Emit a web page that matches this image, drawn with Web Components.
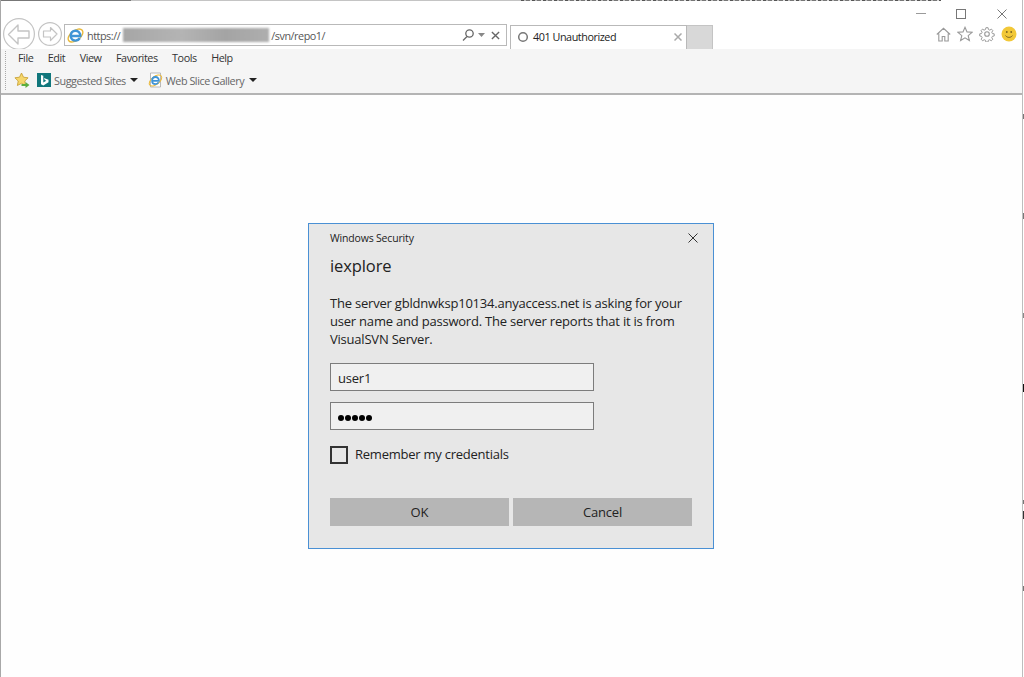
<!DOCTYPE html>
<html>
<head>
<meta charset="utf-8">
<title>401 Unauthorized</title>
<style>
  html, body { margin: 0; height: 100%; background: #fff; overflow: hidden; }
  body { font-family: "Open Sans", "Noto Sans", sans-serif; }
</style>
</head>
<body>
<ie-window>
  <ie-tabbar slot="top"></ie-tabbar>
  <ie-toolbar slot="top"></ie-toolbar>
  <security-dialog
    heading="iexplore"
    message="The server gbldnwksp10134.anyaccess.net is asking for your user name and password. The server reports that it is from VisualSVN Server.">
  </security-dialog>
</ie-window>

<script>
class IeWindow extends HTMLElement {
  constructor() {
    super();
    this.shadowDOM = this.attachShadow({mode: 'open'});
    this.shadowDOM.innerHTML = `
      <style>
        :host {
          display: flex;
          flex-direction: column;
          height: 677px;
          box-sizing: border-box;
          border-left: 1px solid #a8a8a8;
          border-right: 1px solid #bdbdbd;
          margin-right: 1px;
          background: #fff;
          position: relative;
        }
        .edge {
          height: 1px;
          flex: none;
          background:
            repeating-linear-gradient(90deg, #555 0 3px, #bbb 3px 5px, #777 5px 9px, #ddd 9px 11px) 520px 0 / 420px 1px no-repeat,
            linear-gradient(90deg, #777 0 130px, #c4c4c4 130px 520px, #fff 940px);
        }
        .page {
          flex: 1;
          display: flex;
          justify-content: center;
          align-items: flex-start;
          padding: 128px 1px 0 0;
          background: #fefefe;
        }
        /* bits of the window behind, showing past the right edge */
        .behind {
          position: absolute;
          top: 0;
          bottom: 0;
          right: -2px;
          width: 1px;
          background:
            linear-gradient(#777, #777) 0 114px / 1px 5px no-repeat,
            linear-gradient(#777, #777) 0 213px / 1px 6px no-repeat,
            linear-gradient(#888, #888) 0 313px / 1px 5px no-repeat,
            linear-gradient(#111, #111) 0 384px / 1px 8px no-repeat,
            linear-gradient(#777, #777) 0 500px / 1px 4px no-repeat,
            linear-gradient(#333, #333) 0 511px / 1px 8px no-repeat,
            linear-gradient(#777, #777) 0 586px / 1px 5px no-repeat;
        }
      </style>
      <div class="edge"></div>
      <slot name="top"></slot>
      <div class="page"><slot></slot></div>
      <div class="behind"></div>
    `;
  }
}

class IeTabbar extends HTMLElement {
  constructor() {
    super();
    this.shadowDOM = this.attachShadow({mode: 'open'});
    this.shadowDOM.innerHTML = `
      <style>
        :host {
          display: grid;
          grid-template-columns: 1fr 106px;
          height: 48px;
          color: #444;
          font-size: 10.8px;
          letter-spacing: -.45px;
        }
        .left { display: flex; align-items: flex-end; padding-left: 2px; }
        .nav { display: flex; align-items: center; gap: 3px; flex: none; width: 61px; height: 32px; margin-bottom: -1px; }
        .address {
          margin: 0 0 3px 0;
          width: 441px;
          height: 20px;
          flex: none;
          border: 1px solid #b9b9b9;
          display: flex;
          align-items: center;
          background: #fff;
        }
        .url { margin-left: 3px; color: #555; display: flex; align-items: center; flex: 1; white-space: nowrap; }
        .blur {
          display: inline-block;
          width: 146px;
          height: 14px;
          margin: 0 2px 0 3px;
          background: linear-gradient(90deg, #a6a6a6, #b4b4b4 40%, #a4a4a4 70%, #aeaeae);
          filter: blur(.8px);
        }
        .tab {
          margin-left: 3px;
          width: 177px;
          height: 24px;
          flex: none;
          box-sizing: border-box;
          border: 1px solid #b9b9b9;
          border-bottom: 0;
          display: flex;
          align-items: center;
          color: #222;
          padding: 0 0 2px 6px;
          gap: 4px;
        }
        .tab span { flex: 1; white-space: nowrap; }
        .newtab { width: 26px; height: 24px; box-sizing: border-box; flex: none; background: #d8d8d8; border: 1px solid #c4c4c4; border-bottom: 0; border-left: 0; }
        .right { display: flex; flex-direction: column; }
        .caption { height: 22px; display: flex; align-items: flex-start; padding-top: 8px; box-sizing: border-box; }
        .tools { display: flex; gap: 6px; align-items: center; padding-left: 20px; height: 22px; }
        svg { flex: none; display: block; }
      </style>
      <div class="left">
        <div class="nav">
          <svg width="32" height="32" viewBox="0 0 32 32" fill="none">
            <circle cx="16" cy="16" r="15.400" fill="#fff" stroke="#c4c4c4" stroke-width="1.200"/>
            <path d="M15 7 5.500 16.500 15 26v-6h11v-7H15z" fill="#fff" stroke="#c4c4c4" stroke-width="1.400" stroke-linejoin="round"/>
          </svg>
          <svg width="24" height="24" viewBox="0 0 24 24" fill="none">
            <circle cx="12" cy="12" r="11.400" fill="#fff" stroke="#c4c4c4" stroke-width="1.200"/>
            <path d="M12.500 5.500 19 12l-6.500 6.500V15H5.500V9h7z" fill="#fff" stroke="#c4c4c4" stroke-width="1.200" stroke-linejoin="round"/>
          </svg>
        </div>
        <div class="address">
          <svg style="margin-left:2px" width="17" height="17" viewBox="0 0 16 16">
            <ellipse cx="8" cy="8" rx="8" ry="4.600" transform="rotate(-38 8 8)" fill="none" stroke="#eab93a" stroke-width="1.300"/>
            <path d="M3.800 8.500h8.700c.1-2.800-1.800-5-4.500-5-2.700 0-4.500 2.100-4.500 4.800 0 2.800 2 4.500 4.500 4.500 1.800 0 3.200-.9 4-2.300" fill="none" stroke="#3f94d6" stroke-width="2.300"/>
          </svg>
          <div class="url">https://<i class="blur"></i>/svn/repo1/</div>
          <svg width="15" height="14" viewBox="0 0 15 14" fill="none" stroke="#666" stroke-width="1.300">
            <circle cx="8.500" cy="5.500" r="3.700"/><path d="M6 8.500 2 12.500"/>
          </svg>
          <svg style="margin:0 6px 0 2px" width="7" height="4" viewBox="0 0 7 4"><path d="M0 0h7L3.500 4z" fill="#888"/></svg>
          <svg style="margin-right:6px" width="9" height="9" viewBox="0 0 10 10" fill="none" stroke="#666" stroke-width="1.500"><path d="M1 1l8 8M9 1 1 9"/></svg>
        </div>
        <div class="tab">
          <svg width="12" height="12" viewBox="0 0 12 12" fill="none"><circle cx="6" cy="6" r="4.300" stroke="#777" stroke-width="1.500"/></svg>
          <span>401 Unauthorized</span>
          <svg style="margin-right:4px" width="8" height="8" viewBox="0 0 8 8" fill="none" stroke="#aaa" stroke-width="1.500"><path d="M.5.500l7 7M7.500.500l-7 7"/></svg>
        </div>
        <div class="newtab"></div>
      </div>
      <div class="right">
        <div class="caption">
          <svg width="10" height="10" viewBox="0 0 10 10"><path d="M0 4.500h10" stroke="#9a9a9a"/></svg>
          <svg width="10" height="10" style="margin-left:30px" viewBox="0 0 10 10"><rect x=".5" y=".5" width="9" height="9" fill="none" stroke="#777"/></svg>
          <svg width="10" height="10" style="margin-left:31px" viewBox="0 0 10 10"><path d="M.5.500l9 9M9.500.500l-9 9" stroke="#777" fill="none"/></svg>
        </div>
        <div class="tools">
          <svg width="15" height="15" viewBox="0 0 15 15" fill="none" stroke="#999" stroke-width="1.100">
            <path d="M.8 7.500 7.500 1.300l6.700 6.200M2.800 6.500v7.500h3.400V9.500h2.600V14h3.400V6.500"/>
          </svg>
          <svg width="16" height="16" viewBox="0 0 16 16" fill="none" stroke="#999" stroke-width="1.100">
            <path d="M8 1.300l2 4.600 5 .4-3.800 3.300 1.200 4.900L8 11.900l-4.400 2.600 1.200-4.900L1 6.300l5-.4z"/>
          </svg>
          <svg width="16" height="16" viewBox="0 0 16 16" fill="none" stroke="#999" stroke-width="1.100">
            <circle cx="8" cy="8" r="2.300"/>
            <path d="M6.800 1h2.400l.4 2 1.500.7 1.800-1.100 1.600 1.700-1.200 1.700.7 1.500 2 .3v2.400l-2 .4-.7 1.500 1.100 1.700-1.600 1.700-1.800-1.100-1.500.6-.4 2H6.800l-.4-2-1.500-.6-1.800 1.100-1.600-1.700 1.100-1.700-.7-1.500-2-.4V7.800l2-.3.7-1.500-1.200-1.700 1.600-1.700 1.800 1.100 1.500-.7z" transform="translate(.8 .8) scale(.9)"/>
          </svg>
          <svg width="16" height="16" viewBox="0 0 16 16">
            <circle cx="8" cy="8" r="7.500" fill="#f2c838"/>
            <circle cx="5.800" cy="6" r=".9" fill="#7a6320"/><circle cx="10.200" cy="6" r=".9" fill="#7a6320"/>
            <path d="M4.500 9.500c1.500 2.500 5.500 2.500 7 0" fill="none" stroke="#7a6320" stroke-width=".9"/>
          </svg>
        </div>
      </div>
    `;
  }
}

class IeToolbar extends HTMLElement {
  constructor() {
    super();
    this.shadowDOM = this.attachShadow({mode: 'open'});
    this.shadowDOM.innerHTML = `
      <style>
        :host {
          display: block;
          height: 44px;
          background: #f5f5f5;
          border-bottom: 2px solid #b4b4b4;
          font-size: 10.8px;
          letter-spacing: -.45px;
          color: #333;
          position: relative;
        }
        .menu { display: flex; height: 17px; align-items: center; padding-left: 17px; gap: 14.500px; }
        .favs { display: flex; height: 26px; margin-top: 1px; align-items: center; padding-left: 13px; color: #666; }
        .grip { position: absolute; left: 4px; top: 2px; bottom: 3px; border-left: 1px dotted #a8a8a8; }
        .bing { width: 14px; height: 14px; background: #11777c; display: flex; align-items: center; justify-content: center; margin-left: 7px; }
        .caret { width: 0; height: 0; border: 4px solid transparent; border-top: 4px solid #222; border-bottom: 0; }
        svg { display: block; flex: none; }
      </style>
      <i class="grip"></i>
      <div class="menu">
        <span>File</span><span>Edit</span><span>View</span><span>Favorites</span><span>Tools</span><span>Help</span>
      </div>
      <div class="favs">
        <svg width="16" height="16" viewBox="0 0 16 16">
          <path d="M7.500 1l2 4.200 4.600.6-3.300 3.200.8 4.500-4.100-2.200-4.100 2.200.8-4.500L.9 5.800l4.600-.6z" fill="#f6d76b" stroke="#c49a2c" stroke-width=".8"/>
          <path d="M7.500 12h4v-2l4 3-4 3v-2h-4z" fill="#5cae3f"/>
        </svg>
        <div class="bing">
          <svg width="9" height="11" viewBox="0 0 9 11"><path d="M1 0l2.300.8v6.700l3-1.700-1.500-.7-.9-2.200L8.500 4.700v2.600L3.300 10.500 1 9.200z" fill="#fff"/></svg>
        </div>
        <span style="margin-left:3px">Suggested Sites</span>
        <i class="caret" style="margin-left:4px"></i>
        <svg style="margin-left:10px" width="15" height="16" viewBox="0 0 15 16">
          <path d="M2.500 1h10v14h-10z" fill="#fff" stroke="#aaa" stroke-width=".8"/>
          <ellipse cx="7.500" cy="8.500" rx="7.300" ry="4" transform="rotate(-38 7.500 8.500)" fill="none" stroke="#eab93a"/>
          <path d="M4.300 8.800h6.600c.1-2.200-1.300-3.800-3.400-3.800-2 0-3.400 1.600-3.400 3.700 0 2.100 1.500 3.400 3.400 3.400 1.400 0 2.400-.7 3-1.700" fill="none" stroke="#3f94d6" stroke-width="1.800"/>
        </svg>
        <span style="margin-left:3px">Web Slice Gallery</span>
        <i class="caret" style="margin-left:5px"></i>
      </div>
    `;
  }
}

class SecurityDialog extends HTMLElement {
  constructor() {
    super();
    this.shadowDOM = this.attachShadow({mode: 'open'});
  }

  connectedCallback() {
    this.render();
  }

  render() {
    this.shadowDOM.innerHTML = `
      <style>
        :host {
          display: block;
          width: 406px;
          height: 326px;
          box-sizing: border-box;
          background: #e7e7e7;
          border: 1px solid #4a90d4;
          color: #222;
          padding: 0 21px;
          position: relative;
        }
        .caption { font-size: 10.500px; height: 28px; line-height: 28px; letter-spacing: -.17px; }
        .close { position: absolute; top: 9px; right: 15px; }
        h1 { margin: 0; font-weight: 400; font-size: 16.500px; line-height: 28px; height: 28px; letter-spacing: -.1px; }
        p { margin: 14px 0 0; font-size: 13px; line-height: 18px; letter-spacing: -.21px; width: 360px; }
        .field {
          margin-top: 15px;
          width: 264px;
          height: 28px;
          box-sizing: border-box;
          border: 1px solid #7c7c7c;
          background: #f0f0f0;
          font-size: 13px;
          letter-spacing: -.21px;
          line-height: 28px;
          padding-left: 7px;
        }
        .field + .field { margin-top: 11px; }
        .dots { display: flex; align-items: center; gap: 1px; padding-top: 3px; box-sizing: border-box; height: 100%; }
        .dots i { width: 6px; height: 6px; border-radius: 50%; background: #000; }
        .check { display: flex; align-items: center; gap: 7px; margin-top: 15px; font-size: 13px; letter-spacing: -.24px; height: 20px; }
        .check span + span { margin-bottom: 2px; }
        .box { width: 18px; height: 18px; box-sizing: border-box; border: 2px solid #333; flex: none; }
        .buttons { display: grid; grid-template-columns: 179px 179px; gap: 4px; margin-top: 33px; }
        .buttons div { height: 28px; background: #b6b6b6; text-align: center; font-size: 13px; letter-spacing: -.16px; line-height: 28px; }
      </style>
      <div class="caption">Windows Security</div>
      <svg class="close" width="10" height="10" viewBox="0 0 10 10"><path d="M.5.500l9 9M9.500.500l-9 9" stroke="#333" fill="none"/></svg>
      <h1>${this.getAttribute('heading')}</h1>
      <p>${this.getAttribute('message')}</p>
      <div class="field">user1</div>
      <div class="field"><div class="dots"><i></i><i></i><i></i><i></i><i></i></div></div>
      <div class="check"><span class="box"></span><span>Remember my credentials</span></div>
      <div class="buttons"><div>OK</div><div>Cancel</div></div>
    `;
  }
}

customElements.define('ie-window', IeWindow);
customElements.define('ie-tabbar', IeTabbar);
customElements.define('ie-toolbar', IeToolbar);
customElements.define('security-dialog', SecurityDialog);
</script>
</body>
</html>
